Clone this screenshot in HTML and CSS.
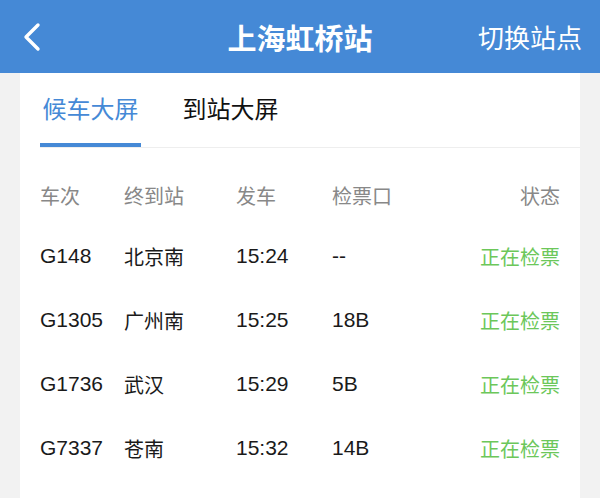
FILE: index.html
```html
<!DOCTYPE html>
<html>
  <head>
    <meta charset="utf-8">
    <link rel="stylesheet" href="styles.css">
  </head>
  <body>
    <header class="topbar">
      <a class="back" href="#">
        <svg width="18" height="30" viewBox="0 0 18 30">
          <polyline points="15,3 3,15 15,27" fill="none" stroke="#fff" stroke-width="3.4" stroke-linecap="round" stroke-linejoin="round" />
        </svg>
      </a>
      <h1 class="title">上海虹桥站</h1>
      <a class="switch" href="#">切换站点</a>
    </header>

    <div class="card">
      <div class="tabs">
        <div class="tab active">候车大屏</div>
        <div class="tab">到站大屏</div>
      </div>

      <div class="board">
        <div class="row head">
          <span>车次</span>
          <span>终到站</span>
          <span>发车</span>
          <span>检票口</span>
          <span class="status">状态</span>
        </div>
        <div class="row">
          <span>G148</span>
          <span class="cn">北京南</span>
          <span>15:24</span>
          <span>--</span>
          <span class="status on">正在检票</span>
        </div>
        <div class="row">
          <span>G1305</span>
          <span class="cn">广州南</span>
          <span>15:25</span>
          <span>18B</span>
          <span class="status on">正在检票</span>
        </div>
        <div class="row">
          <span>G1736</span>
          <span class="cn">武汉</span>
          <span>15:29</span>
          <span>5B</span>
          <span class="status on">正在检票</span>
        </div>
        <div class="row">
          <span>G7337</span>
          <span class="cn">苍南</span>
          <span>15:32</span>
          <span>14B</span>
          <span class="status on">正在检票</span>
        </div>
      </div>
    </div>
  </body>
</html>
```

FILE: styles.css
```css
body {
  margin: 0;
  background: #f2f2f2;
  font-family: "Liberation Sans", "Noto Sans CJK SC", sans-serif;
  color: #1a1a1a;
}
.topbar {
  height: 73px;
  background: #4589d6;
  display: grid;
  grid-template-columns: 1fr auto 1fr;
  align-items: center;
  color: #fff;
}
.back {
  display: flex;
  padding-left: 23px;
}
.title {
  margin: 0;
  font-size: 29px;
  font-weight: 700;
  font-family: "Noto Sans CJK SC", sans-serif;
}
.switch {
  justify-self: end;
  padding-right: 18px;
  font-size: 26px;
  color: #fff;
  text-decoration: none;
  font-family: "Noto Sans CJK SC", sans-serif;
}
.card {
  margin: 0 20px;
  background: #fff;
  padding-left: 20px;
  min-height: 425px;
}
.tabs {
  display: flex;
  gap: 39px;
  border-bottom: 1px solid #eeeeee;
}
.tab {
  font-family: "Noto Sans CJK SC", sans-serif;
  font-size: 24px;
  line-height: 34px;
  padding: 18px 2.5px 18px;
  border-bottom: 4px solid transparent;
  color: #111;
}
.tab.active {
  color: #4589d6;
  border-bottom-color: #4589d6;
}
.board {
  padding: 18px 20px 0 0;
}
.row {
  display: grid;
  grid-template-columns: 84px 112px 96px 1fr auto;
  align-items: center;
  height: 64px;
  font-size: 21px;
}
.row.head {
  height: 58px;
  font-size: 20px;
  color: #888;
}
.cn,
.status {
  font-size: 20px;
}
.status {
  text-align: right;
}
.status.on {
  color: #6cc75a;
}
```
